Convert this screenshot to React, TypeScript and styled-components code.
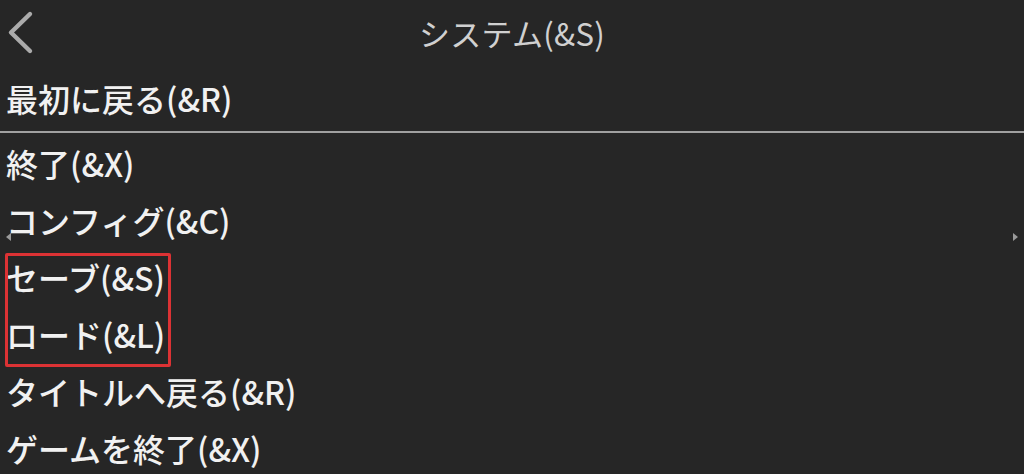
import { createGlobalStyle } from "styled-components"
import styled from "styled-components"

const GlobalStyle = createGlobalStyle`
	html, body {
		margin: 0;
		padding: 0;
		background: #262626;
	}
	body {
		font-family: "Noto Sans CJK JP", "Noto Sans", sans-serif;
	}
`

const MENU_ITEMS = [
	{ label: "終了(&X)" },
	{ label: "コンフィグ(&C)" },
	{ label: "セーブ(&S)", marked: true },
	{ label: "ロード(&L)", marked: true },
	{ label: "タイトルへ戻る(&R)" },
	{ label: "ゲームを終了(&X)" },
]

function BackChevron() {
	return (
		<svg width="40" height="66" viewBox="0 0 40 66" aria-hidden="true">
			<path
				d="M30 14 L11 32.5 L30 51"
				fill="none"
				stroke="#ababab"
				strokeWidth="4.4"
				strokeLinecap="round"
				strokeLinejoin="round"
			/>
		</svg>
	)
}

export default function App() {
	const plain = MENU_ITEMS.slice(0, 2)
	const marked = MENU_ITEMS.filter((i) => i.marked)
	const rest = MENU_ITEMS.slice(4)

	return (
		<Screen>
			<GlobalStyle />
			<TitleBar>
				<BackButton aria-label="戻る">
					<BackChevron />
				</BackButton>
				<Title>システム(&amp;S)</Title>
				<span />
			</TitleBar>
			<TopItem>最初に戻る(&amp;R)</TopItem>
			<Separator />
			<MenuList>
				{plain.map((item) => (
					<MenuItem key={item.label}>{item.label}</MenuItem>
				))}
				<MarkedGroup>
					{marked.map((item) => (
						<MenuItem key={item.label}>{item.label}</MenuItem>
					))}
				</MarkedGroup>
				{rest.map((item) => (
					<MenuItem key={item.label}>{item.label}</MenuItem>
				))}
			</MenuList>
			<ScrollArrow $side="left" />
			<ScrollArrow $side="right" />
		</Screen>
	)
}

const Screen = styled.div`
	position: relative;
	width: 1024px;
	height: 474px;
	overflow: hidden;
	background: #262626;
	display: flex;
	flex-direction: column;

	& > * {
		flex-shrink: 0;
	}
`

const TitleBar = styled.div`
	height: 66px;
	display: grid;
	grid-template-columns: 1fr auto 1fr;
	align-items: center;
`

const BackButton = styled.div`
	display: flex;
	align-items: flex-start;
	height: 66px;
`

const Title = styled.div`
	font-size: 31px;
	font-weight: 400;
	line-height: 66px;
	color: #d0d0d0;
	letter-spacing: 0.3px;
`

const TopItem = styled.div`
	height: 65px;
	line-height: 65px;
	padding-left: 6px;
	font-size: 32px;
	font-weight: 500;
	color: #f1f1f1;
`

const Separator = styled.div`
	height: 2px;
	background: #a0a0a0;
`

const MenuList = styled.div`
	padding-top: 2px;
	display: flex;
	flex-direction: column;
`

const MenuItem = styled.div`
	height: 57px;
	line-height: 57px;
	padding-left: 6px;
	font-size: 32px;
	font-weight: 500;
	color: #f1f1f1;
	white-space: nowrap;
`

const MarkedGroup = styled.div`
	position: relative;

	&::after {
		content: "";
		position: absolute;
		left: 5px;
		top: 4px;
		width: 160px;
		height: 108px;
		border: 3px solid #dc3234;
		border-radius: 2px;
		pointer-events: none;
	}
`

const ScrollArrow = styled.div<{ $side: "left" | "right" }>`
	position: absolute;
	top: 233px;
	${(p) => (p.$side === "left" ? "left: 6px;" : "right: 6px;")}
	width: 0;
	height: 0;
	border-top: 4px solid transparent;
	border-bottom: 4px solid transparent;
	${(p) =>
		p.$side === "left"
			? "border-right: 5px solid #9a9a9a;"
			: "border-left: 5px solid #9a9a9a;"}
`
